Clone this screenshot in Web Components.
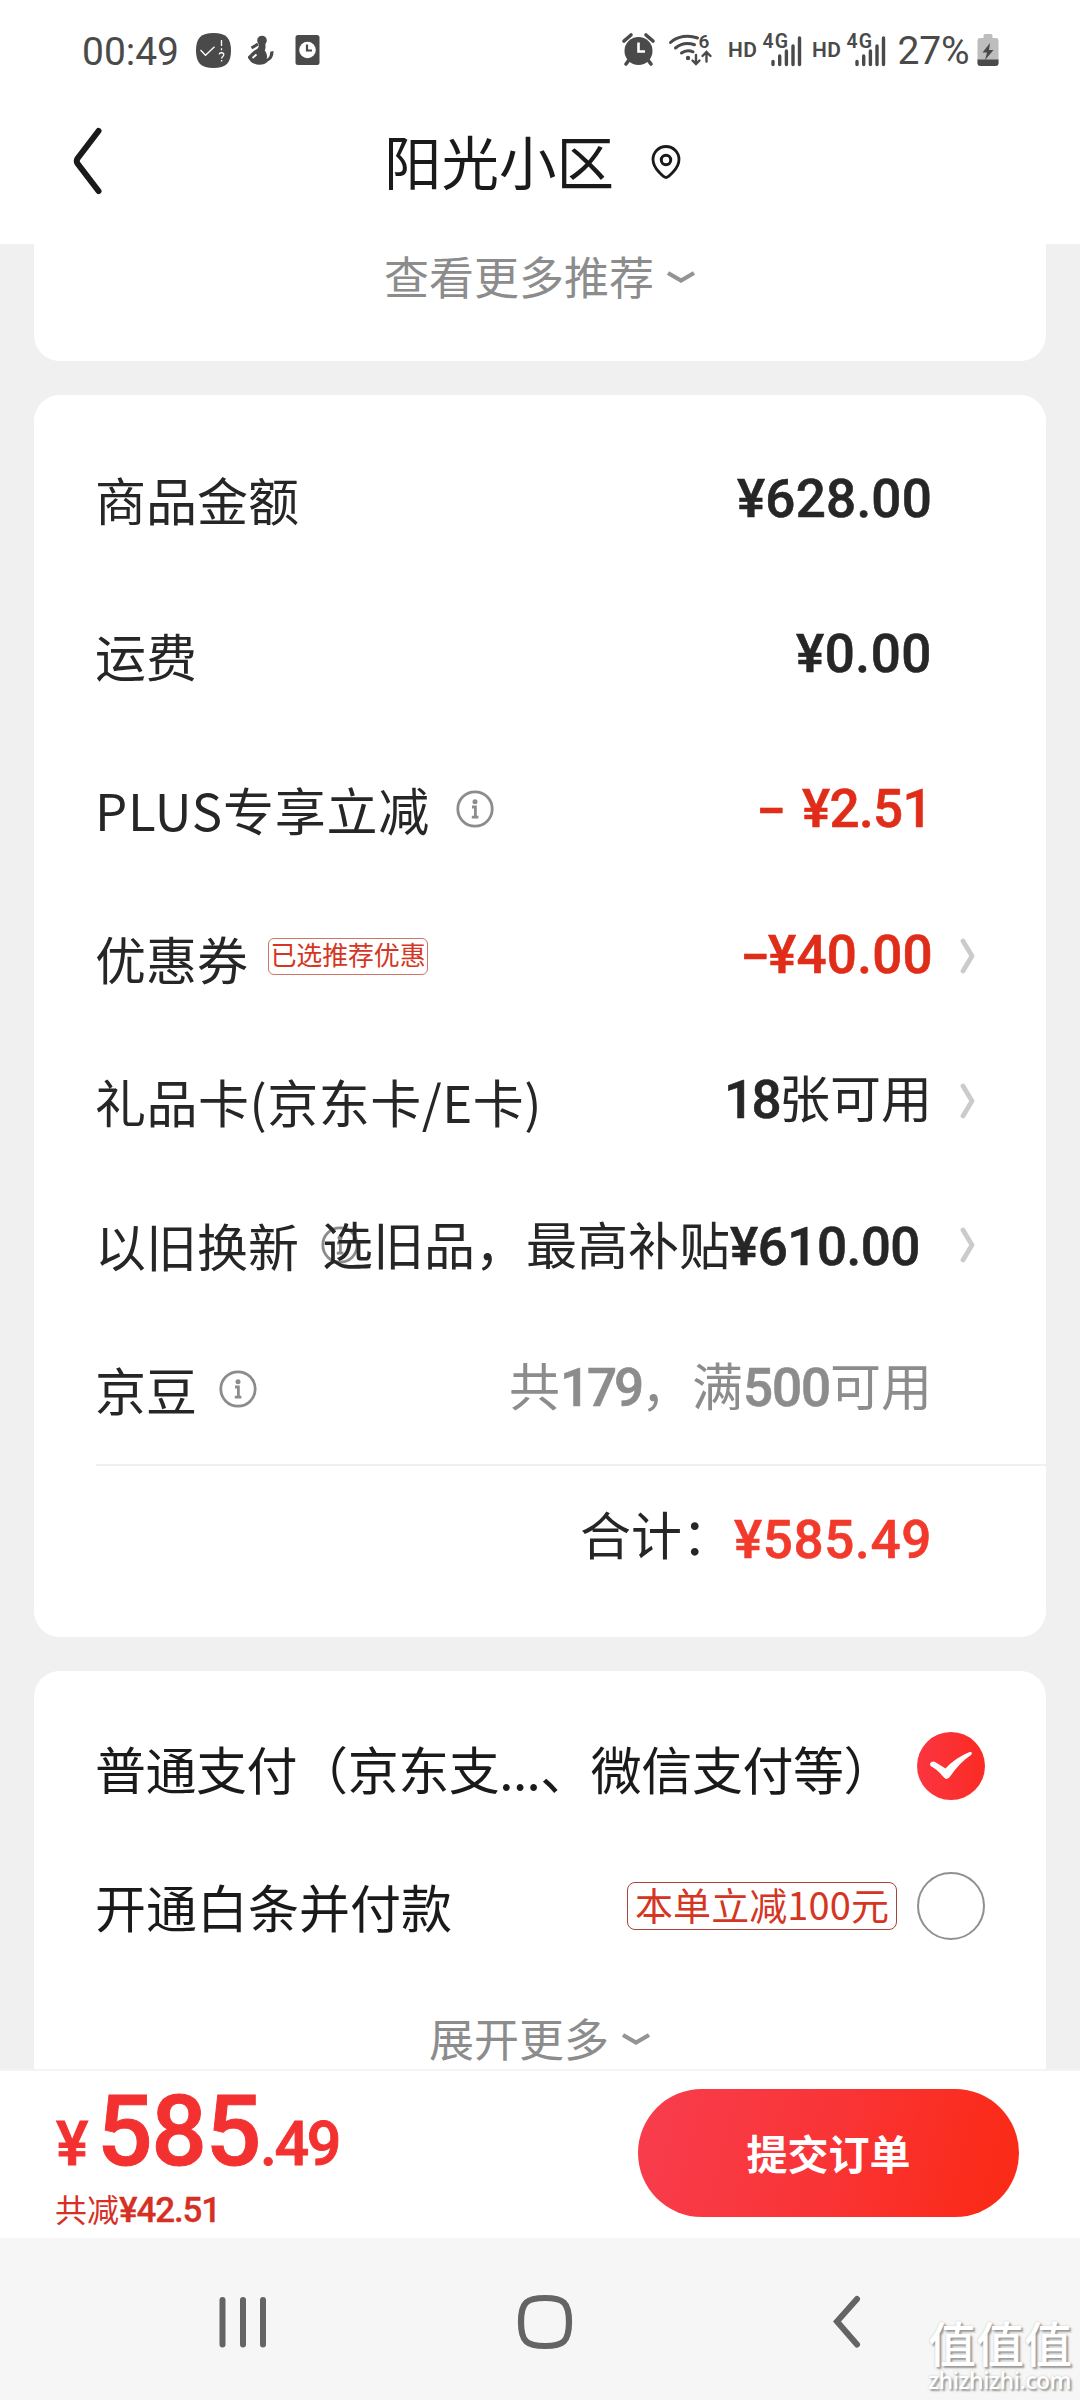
<!DOCTYPE html>
<html lang="zh-CN">
<head>
<meta charset="utf-8">
<title>提交订单</title>
<style>
html,body{margin:0;padding:0}
body{width:1080px;height:2400px;overflow:hidden;background:#f0f0f0;font-family:"Noto Sans CJK SC",sans-serif;color:#262626}
</style>
</head>
<body>
<checkout-page></checkout-page>
<script>
const define = (name, html, setup) => {
  const t = document.createElement('template');
  t.innerHTML = html;
  customElements.define(name, class extends HTMLElement {
    constructor() {
      super();
      this.attachShadow({mode: 'open'}).append(t.content.cloneNode(true));
    }
    connectedCallback() { if (setup) setup(this, this.shadowRoot); }
  });
};

/* Text run: s = font size, w = advance width to fill by tracking, num = figure typeface */
define('ui-text', `<style>
:host{display:inline-block;white-space:nowrap;line-height:70px;font-family:"Noto Sans CJK SC",sans-serif;font-weight:400}
:host([num]){font-family:Roboto,"Noto Sans CJK SC",sans-serif;font-weight:500;-webkit-text-stroke:.6px currentColor}
span{display:inline-block}
</style><span><slot></slot></span>`, (el, root) => {
  el.style.fontSize = (el.getAttribute('s') || 51) + 'px';
  const w = +el.getAttribute('w');
  if (!w) return;
  const span = root.querySelector('span');
  const natural = span.getBoundingClientRect().width;
  span.style.letterSpacing = ((w - natural) / el.textContent.length).toFixed(3) + 'px';
  el.style.width = w + 'px';
});

/* Minus sign: a hyphen widened to the figure width */
define('minus-sign', `<style>:host{display:inline-block;font:500 53px/70px Roboto,sans-serif;-webkit-text-stroke:.4px currentColor}
span{display:inline-block;transform:scaleX(1.6);transform-origin:0 50%}</style><span>-</span>`);

define('info-icon', `<style>:host{display:block;width:38px;height:38px;flex:none}svg{display:block}</style>
<svg width="38" height="38" viewBox="0 0 38 38" fill="none" stroke="#8c8c8c"><circle cx="19" cy="19" r="17.200" stroke-width="2.800"/><circle cx="19" cy="11.800" r="2.500" fill="#8c8c8c" stroke="none"/><path d="M16 17h3.400v10M15.800 27.200h6.600" stroke-width="2.800"/></svg>`);

define('chevron-right', `<style>:host{display:block;width:18px;height:36px}svg{display:block}</style>
<svg width="18" height="36" viewBox="0 0 18 36" fill="none" stroke="#cbcbcb" stroke-width="4.800" stroke-linecap="round" stroke-linejoin="round"><path d="M4 3l9 15-9 15"/></svg>`);

define('more-link', `<style>:host{display:flex;box-sizing:border-box;align-items:center;color:#8c8c8c}ui-text{line-height:46px}svg{display:block;margin:3px 0 0 12px}</style>
<ui-text s="45"><slot></slot></ui-text>
<svg width="30" height="14" viewBox="0 0 30 14" fill="none" stroke="#949494" stroke-width="4.200"><path d="M2 2l13 7.500L28 2"/></svg>`);

define('outline-tag', `<style>
:host{display:flex;box-sizing:border-box;align-items:center;justify-content:center;color:#d43623;border:1.5px solid #cf7467;border-radius:6px;flex:none}
</style><slot></slot>`);

define('ui-card', `<style>
:host{display:block;box-sizing:border-box;width:1012px;margin:0 34px;background:#fff;border-radius:26px;overflow:hidden}
:host([part-of="top"]){border-radius:0 0 26px 26px}
:host([part-of="bottom"]){border-radius:26px 26px 0 0}
</style><slot></slot>`);

define('fee-row', `<style>
:host{display:flex;align-items:center;padding-left:61px;box-sizing:border-box}
.label{flex:1 1 0;min-width:0;display:flex;align-items:center;white-space:nowrap}
.value{flex:none;display:flex;align-items:baseline;white-space:nowrap;z-index:1}
.tail{flex:none;width:114px;box-sizing:border-box;padding-left:27px}
</style><div class="label"><slot name="label"></slot></div><div class="value"><slot></slot></div><div class="tail"><slot name="tail"></slot></div>`);

define('status-bar', `<style>
:host{display:flex;height:102px;box-sizing:border-box;padding:0 81.5px 0 82px;align-items:center;background:#fff;color:#4a4a4a}
svg{display:block;flex:none;overflow:visible}
ui-text{font-family:Roboto,sans-serif}
.gap{flex:1}
</style>
<ui-text s="39" w="97" style="margin-right:17px;padding-top:2px">00:49</ui-text>
<svg width="124" height="38" viewBox="0 0 124 38">
 <path d="M17.500 1C30 1 35 6 35 18.500S30 36 17.500 36 0 31 0 18.500 5 1 17.500 1z" fill="#4a4a4a"/>
 <path d="M4.500 18l5 5.300 9-8.500M25.500 8v6M25.500 16.200v2M23.200 22.400c.3-2.300 4.600-2.200 4.600.3 0 1.700-2.200 1.700-2.200 3.700M25.600 28v1.600" fill="none" stroke="#fff" stroke-width="1.300"/>
 <g fill="#4a4a4a"><circle cx="66" cy="8.500" r="4.800"/><path d="M62.500 11h6.500c.8 3 .8 5-.2 7.500 2 2.500 2.700 5.500 1.900 8.500 2.500-1.500 3.500-3.500 3.500-7.200l3.200-.8c.3 5-1.700 8.700-5.400 10.200-3 3.800-9.500 4.600-14 2.300-2-.3-4-2.500-6-5.500v-1.500c3-2.500 5-5.500 9-7.500 2-1.500 2-3.500 1.500-6z"/></g>
 <path d="M55.500 16l6.500-4" stroke="#4a4a4a" stroke-width="3"/><path d="M56.500 26l4-3.500" stroke="#fff" stroke-width="1.800"/>
 <rect x="99.500" y="3" width="24" height="30" rx="2.500" fill="#4a4a4a"/><circle cx="111.500" cy="18" r="8.300" fill="#fff"/><path d="M111 12.500v6h5" stroke="#4a4a4a" stroke-width="2.200" fill="none"/>
</svg>
<div class="gap"></div>
<svg width="272" height="38" viewBox="620 32 272 38">
 <circle cx="637.500" cy="51" r="14" fill="#4a4a4a"/>
 <path d="M623 41l7-6M652 41l-7-6M628 60l-3 4M647 60l3 4" stroke="#4a4a4a" stroke-width="3.600" stroke-linecap="round"/>
 <path d="M637.500 42.500v9h6.500" stroke="#fff" stroke-width="2.600" fill="none"/>
 <g fill="none" stroke="#4a4a4a" stroke-width="3" stroke-linecap="round"><path d="M669.500 42.500c7-6.500 18-8 27-4.500M674.500 48c5.500-4.500 12-5.500 19-3.200M680.500 53c3.500-2.600 7.500-3 11.500-1.200"/><path d="M695 55v8M691.500 60.500l3.500 3.500 3.500-3.500M705.500 61.500v-9M701.500 56l4-4 4 4" stroke-width="2.400"/></g>
 <circle cx="687" cy="58" r="2.200" fill="#4a4a4a"/>
 <g fill="#4a4a4a" font-family="Roboto,sans-serif" font-weight="600">
 <text x="697.500" y="48" font-size="19">6</text>
 <text x="727" y="57" font-size="21" textLength="29">HD</text><text x="761.500" y="48" font-size="19.500" textLength="25.500">4G</text>
 <text x="811" y="57" font-size="21" textLength="29">HD</text><text x="845.500" y="48" font-size="19.500" textLength="25.500">4G</text></g>
 <path d="M772 61.500v3M778.700 56v8.500M785.400 51v13.500M792 46v18.500M798.500 38v26.500M856 61.500v3M862.700 56v8.500M869.400 51v13.500M876 46v18.500M882.500 38v26.500" stroke="#4a4a4a" stroke-width="3.400" stroke-linecap="round"/>
</svg>
<ui-text s="39" w="72" style="margin:0 7px 0 5px">27%</ui-text>
<svg width="22" height="36" viewBox="0 0 22 36"><path d="M6.500 2.500q0-1.500 1.500-1.500h6q1.500 0 1.500 1.500V5H19q2.500 0 2.500 2.500V30q0 3-3 3h-15q-3 0-3-3V7.500Q.5 5 3 5h3.500z" fill="#bdbdbd"/><path d="M.5 26.500h21v3.500q0 3-3 3h-15q-3 0-3-3z" fill="#4a4a4a"/><path d="M13 10L5.500 19.500H10L8 27l8.500-10H12z" fill="#4a4a4a"/></svg>`);

define('title-bar', `<style>
:host{display:flex;height:142px;box-sizing:border-box;padding:0 0 25px 73px;align-items:center;background:#fff;color:#1a1a1a}
svg{display:block}
ui-text{margin:-2px 36px 0 281px}
</style>
<svg width="30" height="68" viewBox="0 0 30 68" fill="none" stroke="#1a1a1a" stroke-width="6" stroke-linecap="round" stroke-linejoin="round"><path d="M25.500 4L4.500 31.500Q3 34 4.500 36.500L25.500 64"/></svg>
<ui-text s="57.500" w="231"><slot></slot></ui-text>
<svg width="30" height="36" viewBox="0 0 30 36" fill="none" stroke="#1a1a1a" stroke-width="2.800" stroke-linejoin="round" style="margin-top:3px"><path d="M15 33.500C13.500 33.500 2 25 2 15.500a13 13 0 0 1 26 0C28 25 16.500 33.500 15 33.500z"/><circle cx="15" cy="16" r="4.700" stroke-width="3"/></svg>`);

define('pay-option', `<style>
:host{display:flex;align-items:center;padding:0 61px;color:#1a1a1a}
.grow{flex:1}
svg{display:block;margin-left:20px;flex:none}
.on,.off{display:none}
:host([checked]) .on,:host(:not([checked])) .off{display:block}
</style><slot name="label"></slot><div class="grow"></div><slot></slot>
<svg class="on" width="68" height="68" viewBox="0 0 68 68"><defs><linearGradient id="g"><stop stop-color="#fb3540"/><stop offset="1" stop-color="#fb2b24"/></linearGradient></defs><circle cx="34" cy="34" r="34" fill="url(#g)"/><path d="M13 31.500q2.300-3.200 5.500-1.200L28.500 36.500Q38 26 52 20.200q4-.8 2.300 2.500Q42 31 33.500 44q-3.700 5.500-7.500.5Q20.500 37.500 13.500 34z" fill="#fff"/></svg>
<svg class="off" width="68" height="68" viewBox="0 0 68 68"><circle cx="34" cy="34" r="33" fill="#fff" stroke="#909090" stroke-width="2"/></svg>`);

define('submit-bar', `<style>
:host{display:flex;justify-content:space-between;box-sizing:border-box;height:169px;background:#fff;border-top:2px solid #f4f4f4;padding:0 61px 0 56px;color:#f33131}
.price{display:flex;align-items:baseline;height:96px;margin-top:11px}
.price ui-text{line-height:100px;-webkit-text-stroke:.9px currentColor}
.save{display:flex;align-items:baseline;height:44px;color:#d62f24;margin-top:7.5px}
.save ui-text{line-height:44px}
button{all:unset;box-sizing:border-box;width:381px;height:128px;border-radius:64px;margin-top:18px;background:linear-gradient(105deg,#f83d4e 0%,#f93436 50%,#fb2b19 90%);display:flex;justify-content:center;align-items:center;color:#fff}
button ui-text{font-weight:600;margin-top:-2px}
</style>
<div><div class="price"><ui-text num s="61" w="41">¥</ui-text><ui-text num s="98" w="163">585</ui-text><ui-text num s="61" w="79">.49</ui-text></div>
<div class="save"><ui-text s="32" style="margin-left:-1px">共减</ui-text><ui-text num s="35" w="101" style="-webkit-text-stroke-width:.3px">¥42.51</ui-text></div></div>
<button><ui-text s="41">提交订单</ui-text></button>`);

define('nav-bar', `<style>
:host{display:flex;position:relative;height:162px;background:#f6f6f6;box-sizing:border-box;padding:56px 0 0 218px}
svg{display:block;flex:none}
.mark{position:absolute;left:928px;top:77px;width:146px;color:#fff;text-shadow:2px 2px 2px #999,0 0 2px #c4c4c4;display:flex;flex-direction:column}
.mark ui-text{line-height:52px;font-weight:500}
.mark ui-text+ui-text{line-height:24px;margin-top:1px;font-family:"Open Sans",sans-serif;font-weight:600}
</style>
<svg width="50" height="56" viewBox="0 0 50 56" stroke="#646464" stroke-width="6" stroke-linecap="round"><path d="M4.500 6v44.500M25 6v44.500M45 6v44.500"/></svg>
<svg width="56" height="56" viewBox="0 0 56 56" style="margin-left:249px" fill="none" stroke="#646464" stroke-width="6.200"><path d="M28 4C46 4 52 8 52 28s-6 24-24 24S4 48 4 28 10 4 28 4z"/></svg>
<svg width="34" height="56" viewBox="0 0 34 56" style="margin-left:256px" fill="none" stroke="#646464" stroke-width="6" stroke-linecap="round"><path d="M28 5L8 27.500l20 23"/></svg>
<div class="mark"><ui-text s="48" w="144">值值值</ui-text><ui-text s="23" w="143">zhizhizhi.com</ui-text></div>`);

define('checkout-page', `<style>
:host{display:flex;flex-direction:column;width:1080px;height:2400px;background:#f0f0f0;color:#262626}
main{height:1825px;overflow:hidden;flex:none}
.red{color:#e02d19}.sum{color:#f23a2c}.grey{color:#8c8c8c}
hr{border:0;height:2px;background:#f0f0f0;margin:0 0 0 62px}
.up{margin-bottom:3px}.up2{margin-bottom:6px}.down{margin-top:1px}
.low{margin-top:3px}
</style>
<status-bar></status-bar>
<title-bar>阳光小区</title-bar>
<main>
<ui-card part-of="top" style="height:117px"><more-link style="height:64px;padding-left:350px">查看更多推荐</more-link></ui-card>
<ui-card style="height:1242px;margin-top:34px;padding-top:25px">
 <fee-row style="height:155.500px"><ui-text slot="label" class="low">商品金额</ui-text><ui-text num s="53" w="195" class="low">¥628.00</ui-text></fee-row>
 <fee-row style="height:155.500px"><ui-text slot="label" class="low">运费</ui-text><ui-text num s="53" w="136" style="margin-top:1px">¥0.00</ui-text></fee-row>
 <fee-row style="height:155.500px"><ui-text slot="label" w="335" style="margin-right:26px">PLUS专享立减</ui-text><info-icon slot="label"></info-icon><minus-sign class="red" style="width:45px"></minus-sign><ui-text class="red" num s="53" w="130">¥2.51</ui-text></fee-row>
 <fee-row style="height:139.500px"><ui-text slot="label" class="low" style="margin-right:20px">优惠券</ui-text><outline-tag slot="label" style="width:160px;height:37px"><ui-text s="26" w="155" style="line-height:28px;margin-top:-4px">已选推荐优惠</ui-text></outline-tag><minus-sign class="red up" style="width:27px"></minus-sign><ui-text class="red up" num s="53" w="165" style="margin-right:-1px">¥40.00</ui-text><chevron-right slot="tail"></chevron-right></fee-row>
 <fee-row style="height:149.500px"><ui-text slot="label" w="447">礼品卡(京东卡/E卡)</ui-text><ui-text num s="53" w="55" class="up2">18</ui-text><ui-text class="up2">张可用</ui-text><chevron-right slot="tail"></chevron-right></fee-row>
 <fee-row style="height:138.500px"><ui-text slot="label" style="margin-right:22px">以旧换新</ui-text><info-icon slot="label"></info-icon><ui-text class="down" w="408">选旧品，最高补贴</ui-text><ui-text class="down" num s="53" w="190" style="margin-right:12px">¥610.00</ui-text><chevron-right slot="tail"></chevron-right></fee-row>
 <fee-row style="height:149.500px"><ui-text slot="label" style="margin-right:22px">京豆</ui-text><info-icon slot="label"></info-icon><ui-text class="grey up2">共</ui-text><ui-text class="grey up2" num s="53" w="81">179</ui-text><ui-text class="grey up2">，满</ui-text><ui-text class="grey up2" num s="53" w="87">500</ui-text><ui-text class="grey up2">可用</ui-text></fee-row>
 <hr>
 <fee-row style="height:144px;align-items:center"><ui-text style="position:relative;top:-3px;margin-left:-2px;margin-right:1px">合计：</ui-text><ui-text class="sum" num s="53" w="198">¥585.49</ui-text></fee-row>
</ui-card>
<ui-card part-of="bottom" style="height:400px;margin-top:34px;padding-top:25px">
 <pay-option checked style="height:140px"><ui-text slot="label" w="799" class="low">普通支付（京东支...、微信支付等）</ui-text></pay-option>
 <pay-option style="height:140px"><ui-text slot="label" style="margin-top:-1px">开通白条并付款</ui-text><outline-tag style="width:270px;height:48px;border-color:#a8433a;border-radius:8px"><ui-text s="38" w="254" style="line-height:40px;margin-top:-5px">本单立减100元</ui-text></outline-tag></pay-option>
 <more-link style="height:124px;padding-left:395px">展开更多</more-link>
</ui-card>
</main>
<submit-bar></submit-bar>
<nav-bar></nav-bar>`);
</script>
</body>
</html>
